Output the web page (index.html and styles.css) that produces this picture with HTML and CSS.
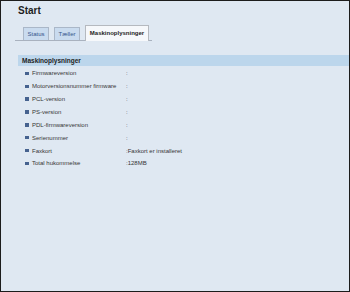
FILE: index.html
```html
<!DOCTYPE html>
<html lang="da">
<head>
<meta charset="utf-8">
<title>Start</title>
<link rel="stylesheet" href="styles.css">
</head>
<body>
<div class="page">
  <h1 class="title">Start</h1>
  <div class="tabs">
    <div class="tab">Status</div>
    <div class="tab">Tæller</div>
    <div class="tab active">Maskinoplysninger</div>
  </div>
  <div class="section">
    <div class="bar">Maskinoplysninger</div>
    <div class="rows">
      <div class="row"><span class="bullet"></span><span class="label">Firmwareversion</span><span class="value">:</span></div>
      <div class="row"><span class="bullet"></span><span class="label">Motorversionsnummer firmware</span><span class="value">:</span></div>
      <div class="row"><span class="bullet"></span><span class="label">PCL-version</span><span class="value">:</span></div>
      <div class="row"><span class="bullet"></span><span class="label">PS-version</span><span class="value">:</span></div>
      <div class="row"><span class="bullet"></span><span class="label">PDL-firmwareversion</span><span class="value">:</span></div>
      <div class="row"><span class="bullet"></span><span class="label">Serienummer</span><span class="value">:</span></div>
      <div class="row"><span class="bullet"></span><span class="label">Faxkort</span><span class="value">:Faxkort er installeret</span></div>
      <div class="row"><span class="bullet"></span><span class="label">Total hukommelse</span><span class="value">:128MB</span></div>
    </div>
  </div>
</div>
</body>
</html>
```
FILE: styles.css
```css
html, body {
  margin: 0;
  padding: 0;
}
body {
  font-family: "Liberation Sans", Arial, sans-serif;
  color: #333;
}
.page {
  width: 350px;
  height: 292px;
  box-sizing: border-box;
  border: 1px solid #1c1c1c;
  background: #dfe8f2;
  overflow: hidden;
}
.title {
  margin: 4px 0 0 17px;
  font-size: 10px;
  line-height: 12px;
  font-weight: bold;
  color: #1e1e1e;
}
.tabs {
  display: flex;
  align-items: flex-end;
  gap: 5px;
  margin: 8px 0 0 14px;
  padding-left: 8px;
  width: 129px;
  height: 15px;
  border-bottom: 1px solid #a9b2bf;
}
.tab {
  box-sizing: border-box;
  height: 13px;
  padding: 2px 3px 0;
  font-size: 6px;
  line-height: 9px;
  color: #34558c;
  background: #c9dbef;
  border: 1px solid #aab7c8;
  border-bottom: none;
  text-align: center;
}
.tab:nth-child(1) { width: 26px; }
.tab:nth-child(2) { width: 26px; }
.tab.active {
  width: 64px;
  height: 16px;
  margin-bottom: -1px;
  padding-top: 3px;
  background: #f6f8fb;
  border-color: #b5b9bf;
  color: #1e1e1e;
  font-weight: bold;
}
.section {
  margin: 14px 0 0 17px;
}
.bar {
  height: 11px;
  padding-left: 4px;
  background: #bcd6ec;
  font-size: 6.5px;
  line-height: 11px;
  font-weight: bold;
  color: #1e1e1e;
}
.rows {
  padding-top: 1px;
}
.row {
  display: flex;
  align-items: center;
  height: 12.86px;
  padding-left: 7px;
  font-size: 6px;
  color: #363636;
}
.bullet {
  width: 3.5px;
  height: 3.5px;
  margin-right: 3.5px;
  background: #46628f;
  flex: none;
}
.label {
  width: 94px;
  flex: none;
}
```
